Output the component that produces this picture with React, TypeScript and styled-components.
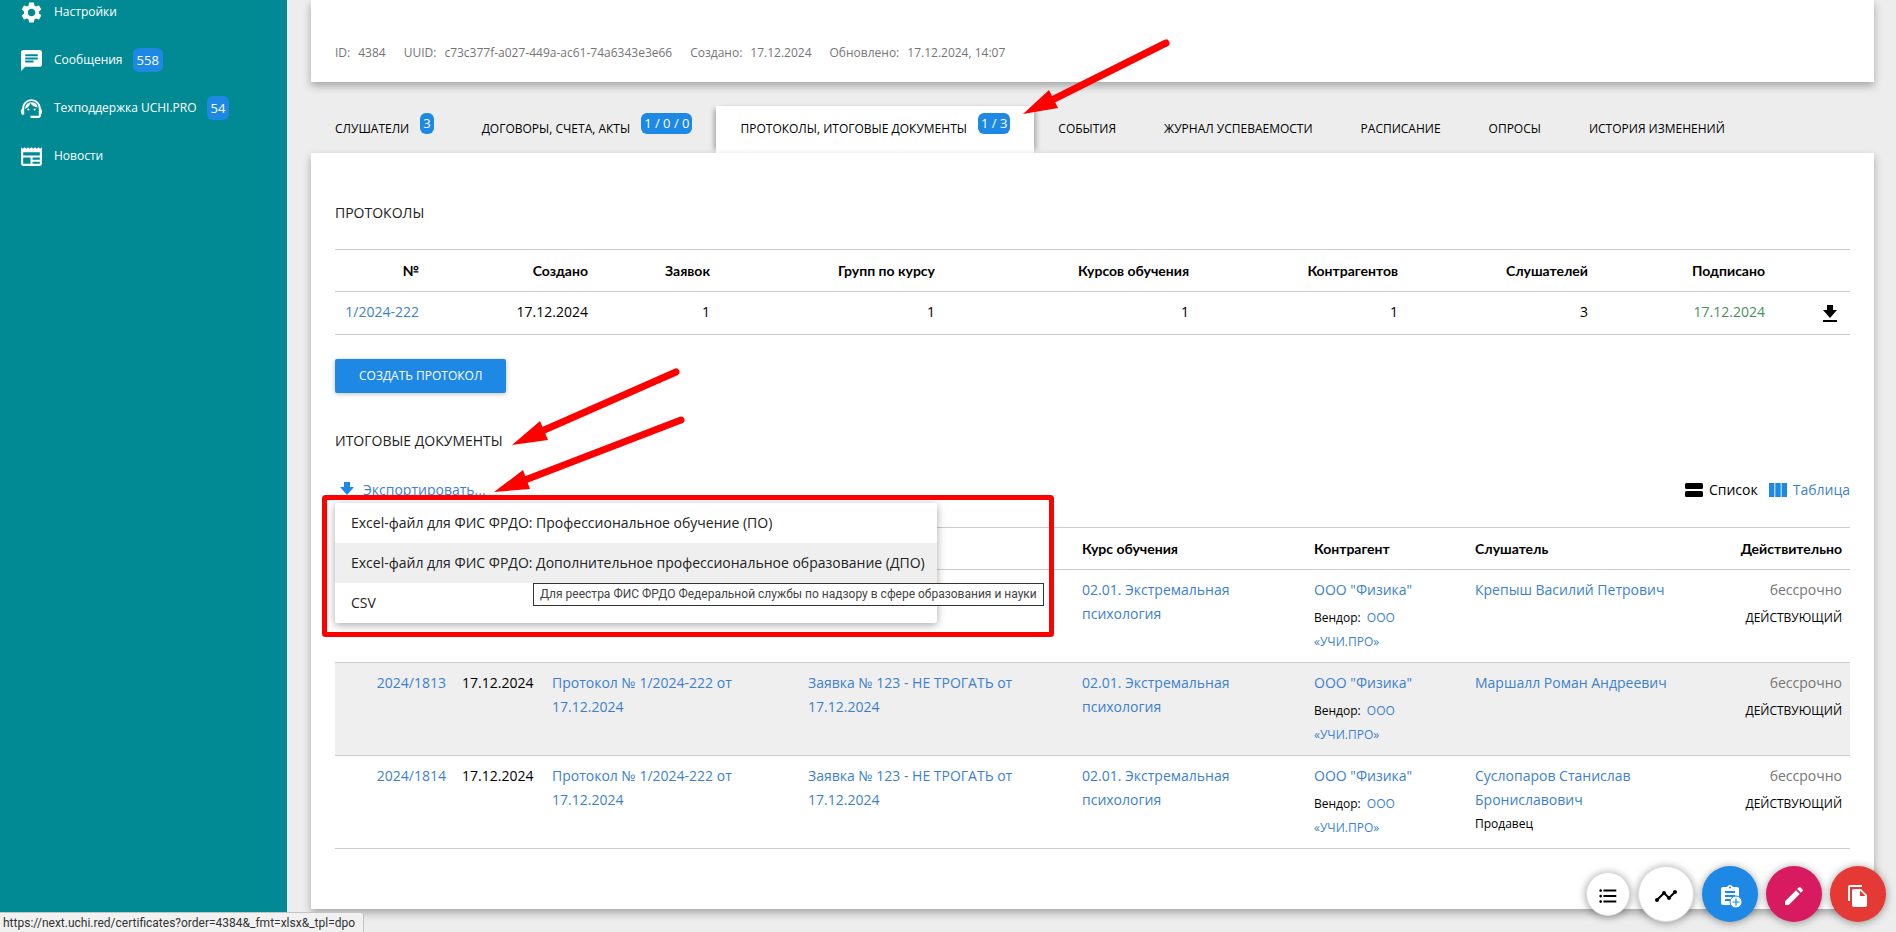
import React from "react";
import styled, { createGlobalStyle, css } from "styled-components";
import {
  MdSettings,
  MdChat,
  MdSupportAgent,
  MdNewspaper,
  MdFormatListBulleted,
  MdTimeline,
  MdEdit,
  MdFileCopy,
} from "react-icons/md";

const color = {
  teal: "#018a94",
  blue: "#1e88e5",
  link: "#3d7fcc",
  page: "#ededed",
  stripe: "#efefef",
  line: "#cdcdcd",
  muted: "#757575",
  green: "#4a9159",
  red: "#ff0000",
};

const GlobalStyle = createGlobalStyle`
  *, *::before, *::after { box-sizing: border-box; }
  body {
    margin: 0;
    background: ${color.page};
    color: #000;
    font: 14px/24px "Open Sans", "Noto Sans", sans-serif;
    overflow: hidden;
  }
  a { color: ${color.link}; text-decoration: none; }
`;

const Shell = styled.div`
  position: relative;
  display: grid;
  grid-template-columns: 287px minmax(0, 1fr);
  min-height: 100vh;
`;

const Sidebar = styled.nav`
  background: ${color.teal};
`;

const NavList = styled.ul`
  list-style: none;
  margin: -12px 0 0;
  padding: 0;
`;

const NavLink = styled.a`
  display: flex;
  align-items: center;
  height: 48px;
  padding: 0 19px;
  gap: 10px;
  color: #fff;
  font-size: 12px;
  svg { width: 25px; height: 25px; flex: none; }
`;

const Badge = styled.span<{ $large?: boolean }>`
  flex: none;
  padding: 0 ${(p) => (p.$large ? 4 : 3)}px;
  border-radius: 6px;
  background: ${color.blue};
  color: #fff;
  font-size: 13px;
  line-height: ${(p) => (p.$large ? 24 : 21)}px;
`;

const Main = styled.main`
  padding: 0 22px 20px 24px;
`;

const Card = styled.section`
  background: #fff;
  padding: 0 24px;
  box-shadow: 0 4px 8px rgba(0, 0, 0, 0.3);
`;

const SummaryCard = styled(Card)`
  padding-top: 41px;
  padding-bottom: 17px;
  margin-bottom: 24px;
`;

const MetaList = styled.dl`
  display: flex;
  gap: 18px;
  margin: 0;
  font-size: 12px;
  color: ${color.muted};
`;

const MetaItem = styled.div`
  display: flex;
  gap: 8px;
  dd { margin: 0; }
`;

const Tabs = styled.div`
  display: flex;
`;

const Tab = styled.button<{ $active?: boolean }>`
  display: flex;
  align-items: flex-start;
  gap: 11px;
  height: 47px;
  padding: 7px 24px;
  border: 0;
  background: none;
  color: #000;
  font: inherit;
  font-size: 12px;
  white-space: nowrap;
  ${(p) =>
    p.$active &&
    css`
      background: #fff;
      box-shadow: -5px 0 5px -3px rgba(0, 0, 0, 0.3), 5px 0 5px -3px rgba(0, 0, 0, 0.3);
    `}
`;

const TabLabel = styled.span`
  padding-top: 4px;
`;

const Panel = styled(Card)`
  position: relative;
  padding-top: 48px;
  padding-bottom: 60px;
`;

const Heading = styled.h2`
  margin: 0 0 24px;
  font-size: 14px;
  font-weight: 400;
  color: #222;
`;

const Table = styled.table`
  width: 100%;
  table-layout: fixed;
  border-collapse: collapse;
`;

const Col = styled.col<{ $w: number }>`
  width: ${(p) => p.$w}px;
`;

const Row = styled.tr<{ $striped?: boolean }>`
  border-top: 1px solid ${color.line};
  border-bottom: 1px solid ${color.line};
  background: ${(p) => (p.$striped ? color.stripe : "transparent")};
`;

const Th = styled.th<{ $right?: boolean }>`
  padding: 9px 8px 8px;
  text-align: ${(p) => (p.$right ? "right" : "left")};
  font-family: Lato, "Open Sans", sans-serif;
  font-weight: 700;
`;

const Td = styled.td<{ $right?: boolean }>`
  padding: 8px;
  vertical-align: top;
  text-align: ${(p) => (p.$right ? "right" : "left")};
`;

const Muted = styled.span`
  color: ${color.muted};
`;

const Signed = styled.span`
  color: ${color.green};
`;

const Note = styled.div<{ $spaced?: boolean }>`
  margin-top: ${(p) => (p.$spaced ? 4 : 0)}px;
  font-size: 12px;
`;

const VendorLink = styled.a`
  margin-left: 3px;
`;

const IconLink = styled.a`
  display: flex;
  justify-content: flex-end;
  align-items: center;
  height: 26px;
  padding-right: 5px;
  color: #000;
`;

const PrimaryButton = styled.button`
  display: block;
  height: 34px;
  margin: 24px 0 36px;
  padding: 0 24px;
  border: 0;
  border-radius: 2px;
  background: ${color.blue};
  color: #fff;
  font: inherit;
  font-size: 12px;
  box-shadow: 0 1px 5px rgba(0, 0, 0, 0.25);
`;

const Toolbar = styled.div`
  display: flex;
  justify-content: space-between;
  height: 26px;
  margin-bottom: 24px;
`;

const ExportBox = styled.div`
  position: relative;
`;

const ExportButton = styled.button`
  display: flex;
  align-items: center;
  gap: 9px;
  height: 26px;
  padding: 0 5px;
  border: 0;
  background: none;
  color: ${color.link};
  font: inherit;
  svg { color: ${color.blue}; }
`;

const Menu = styled.ul`
  position: absolute;
  z-index: 2;
  top: 26px;
  left: 0;
  margin: 0;
  padding: 0;
  list-style: none;
  width: 602px;
  border-radius: 2px;
  background: #fff;
  box-shadow: 0 2px 8px rgba(0, 0, 0, 0.35);
`;

const MenuLink = styled.a<{ $hovered?: boolean }>`
  display: block;
  padding: 0 16px;
  line-height: 40px;
  color: #222;
  white-space: nowrap;
  background: ${(p) => (p.$hovered ? color.stripe : "transparent")};
`;

const Tooltip = styled.div`
  position: absolute;
  z-index: 3;
  top: 80px;
  left: 198px;
  padding: 0 6px;
  border: 1px solid #333;
  background: #fff;
  color: #444;
  font: 12px/21px Roboto, sans-serif;
  white-space: nowrap;
`;

const ViewSwitch = styled.div`
  display: flex;
  gap: 11px;
`;

const ViewButton = styled.button<{ $active?: boolean }>`
  display: flex;
  align-items: center;
  gap: 6px;
  padding: 0;
  border: 0;
  background: none;
  color: ${(p) => (p.$active ? color.link : "#000")};
  font: inherit;
  svg { color: ${(p) => (p.$active ? color.blue : "#000")}; }
`;

const FabBar = styled.div`
  position: fixed;
  z-index: 4;
  right: 10px;
  bottom: 10px;
  display: flex;
  align-items: center;
  gap: 8px;
`;

const Fab = styled.button<{ $bg?: string; $small?: boolean }>`
  display: flex;
  align-items: center;
  justify-content: center;
  width: ${(p) => (p.$small ? 44 : 56)}px;
  height: ${(p) => (p.$small ? 44 : 56)}px;
  padding: 4px 0 0;
  border: ${(p) => (p.$bg ? "0" : "1px solid #dcdcdc")};
  border-radius: 50%;
  background: ${(p) => p.$bg ?? "#fff"};
  color: ${(p) => (p.$bg ? "#fff" : "#000")};
  box-shadow: 0 1px 8px rgba(0, 0, 0, 0.4);
  svg { flex: none; }
`;

const StatusBar = styled.div`
  position: fixed;
  z-index: 5;
  left: 0;
  bottom: 0;
  width: 364px;
  height: 20px;
  padding-left: 3px;
  border-top: 1px solid #c4c4c4;
  border-right: 1px solid #c4c4c4;
  border-top-right-radius: 3px;
  background: #f1f1f1;
  color: #333;
  font: 12px/20px Roboto, sans-serif;
`;

const Annotations = styled.svg`
  position: absolute;
  z-index: 3;
  top: 0;
  left: 0;
  overflow: visible;
  pointer-events: none;
`;

const DownloadIcon = () => (
  <svg width="14" height="17" viewBox="0 0 14 17" fill="currentColor" aria-hidden="true">
    <path d="M4 0h6v5h4L7 13 0 5h4zM0 15h14v2H0z" />
  </svg>
);

const ListIcon = () => (
  <svg width="18" height="14" viewBox="0 0 18 14" fill="currentColor" aria-hidden="true">
    <rect width="18" height="6" rx="1.5" />
    <rect y="8" width="18" height="6" rx="1.5" />
  </svg>
);

const ColumnsIcon = () => (
  <svg width="18" height="14" viewBox="0 0 18 14" fill="currentColor" aria-hidden="true">
    <path d="M0 0h5.4v14H0zM6.3 0h5.4v14H6.3zM12.6 0H18v14h-5.4z" />
  </svg>
);

const ClipboardAddIcon = () => (
  <svg width="24" height="24" viewBox="0 0 24 24" aria-hidden="true">
    <path
      fill="#fff"
      d="M19 3h-4.2C14.4 1.8 13.3 1 12 1s-2.4.8-2.8 2H5a2 2 0 0 0-2 2v14a2 2 0 0 0 2 2h14a2 2 0 0 0 2-2V5a2 2 0 0 0-2-2z"
    />
    <circle cx="12" cy="3.6" r="1" fill={color.blue} />
    <path fill={color.blue} d="M7 7h10v2H7zM7 11h10v2H7zM7 15h7v2H7z" />
    <circle cx="18" cy="18" r="6" fill="#fff" stroke={color.blue} />
    <path fill={color.blue} d="M17.4 14.5h1.2v2.9h2.9v1.2h-2.9v2.9h-1.2v-2.9h-2.9v-1.2h2.9z" />
  </svg>
);

const navItems = [
  { label: "Настройки", icon: <MdSettings /> },
  { label: "Сообщения", icon: <MdChat />, count: 558 },
  { label: "Техподдержка UCHI.PRO", icon: <MdSupportAgent />, count: 54 },
  { label: "Новости", icon: <MdNewspaper /> },
];

const meta = [
  ["ID:", "4384"],
  ["UUID:", "c73c377f-a027-449a-ac61-74a6343e3e66"],
  ["Создано:", "17.12.2024"],
  ["Обновлено:", "17.12.2024, 14:07"],
];

const tabs = [
  { label: "СЛУШАТЕЛИ", badge: "3" },
  { label: "ДОГОВОРЫ, СЧЕТА, АКТЫ", badge: "1 / 0 / 0" },
  { label: "ПРОТОКОЛЫ, ИТОГОВЫЕ ДОКУМЕНТЫ", badge: "1 / 3", active: true },
  { label: "СОБЫТИЯ" },
  { label: "ЖУРНАЛ УСПЕВАЕМОСТИ" },
  { label: "РАСПИСАНИЕ" },
  { label: "ОПРОСЫ" },
  { label: "ИСТОРИЯ ИЗМЕНЕНИЙ" },
];

const protocolCols = [92, 169, 122, 225, 254, 209, 190, 177, 77];
const protocolHeads = [
  "№",
  "Создано",
  "Заявок",
  "Групп по курсу",
  "Курсов обучения",
  "Контрагентов",
  "Слушателей",
  "Подписано",
];

const documentCols = [119, 90, 256, 274, 232, 161, 243, 140];

interface Doc {
  id: number;
  person: string;
  number?: string;
  date?: string;
  protocol?: string;
  order?: string;
  role?: string;
  striped?: boolean;
}

const documents: Doc[] = [
  { id: 1, person: "Крепыш Василий Петрович" },
  {
    id: 2,
    number: "2024/1813",
    date: "17.12.2024",
    protocol: "Протокол № 1/2024-222 от",
    order: "Заявка № 123 - НЕ ТРОГАТЬ от",
    person: "Маршалл Роман Андреевич",
    striped: true,
  },
  {
    id: 3,
    number: "2024/1814",
    date: "17.12.2024",
    protocol: "Протокол № 1/2024-222 от",
    order: "Заявка № 123 - НЕ ТРОГАТЬ от",
    person: "Суслопаров Станислав Брониславович",
    role: "Продавец",
  },
];

const DatedLink = ({ title, date }: { title?: string; date?: string }) =>
  title ? (
    <a href="#">
      {title}
      <br />
      {date}
    </a>
  ) : null;

export default function App() {
  return (
    <>
      <GlobalStyle />
      <Shell>
        <Sidebar>
          <NavList>
            {navItems.map((item) => (
              <li key={item.label}>
                <NavLink href="#">
                  {item.icon}
                  <span>{item.label}</span>
                  {item.count && <Badge $large>{item.count}</Badge>}
                </NavLink>
              </li>
            ))}
          </NavList>
        </Sidebar>

        <Main>
          <SummaryCard>
            <MetaList>
              {meta.map(([name, value]) => (
                <MetaItem key={name}>
                  <dt>{name}</dt>
                  <dd>{value}</dd>
                </MetaItem>
              ))}
            </MetaList>
          </SummaryCard>

          <Tabs role="tablist">
            {tabs.map((tab) => (
              <Tab key={tab.label} role="tab" aria-selected={!!tab.active} $active={tab.active}>
                <TabLabel>{tab.label}</TabLabel>
                {tab.badge && <Badge>{tab.badge}</Badge>}
              </Tab>
            ))}
          </Tabs>

          <Panel>
            <Heading>ПРОТОКОЛЫ</Heading>
            <Table>
              <colgroup>
                {protocolCols.map((w, i) => (
                  <Col key={i} $w={w} />
                ))}
              </colgroup>
              <thead>
                <Row>
                  {protocolHeads.map((head) => (
                    <Th key={head} $right>
                      {head}
                    </Th>
                  ))}
                  <Th />
                </Row>
              </thead>
              <tbody>
                <Row>
                  <Td $right>
                    <a href="#">1/2024-222</a>
                  </Td>
                  <Td $right>17.12.2024</Td>
                  <Td $right>1</Td>
                  <Td $right>1</Td>
                  <Td $right>1</Td>
                  <Td $right>1</Td>
                  <Td $right>3</Td>
                  <Td $right>
                    <Signed>17.12.2024</Signed>
                  </Td>
                  <Td>
                    <IconLink href="#" aria-label="Скачать">
                      <DownloadIcon />
                    </IconLink>
                  </Td>
                </Row>
              </tbody>
            </Table>
            <PrimaryButton>СОЗДАТЬ ПРОТОКОЛ</PrimaryButton>

            <Heading>ИТОГОВЫЕ ДОКУМЕНТЫ</Heading>
            <Toolbar>
              <ExportBox>
                <ExportButton aria-haspopup="menu" aria-expanded="true">
                  <DownloadIcon />
                  Экспортировать...
                </ExportButton>
                <Menu>
                  <li>
                    <MenuLink href="#">Excel-файл для ФИС ФРДО: Профессиональное обучение (ПО)</MenuLink>
                  </li>
                  <li>
                    <MenuLink href="#" $hovered>
                      Excel-файл для ФИС ФРДО: Дополнительное профессиональное образование (ДПО)
                    </MenuLink>
                    <Tooltip role="tooltip">
                      Для реестра ФИС ФРДО Федеральной службы по надзору в сфере образования и науки
                    </Tooltip>
                  </li>
                  <li>
                    <MenuLink href="#">CSV</MenuLink>
                  </li>
                </Menu>
              </ExportBox>
              <ViewSwitch>
                <ViewButton>
                  <ListIcon />
                  Список
                </ViewButton>
                <ViewButton $active>
                  <ColumnsIcon />
                  Таблица
                </ViewButton>
              </ViewSwitch>
            </Toolbar>

            <Table>
              <colgroup>
                {documentCols.map((w, i) => (
                  <Col key={i} $w={w} />
                ))}
              </colgroup>
              <thead>
                <Row>
                  <Th colSpan={4} />
                  <Th>Курс обучения</Th>
                  <Th>Контрагент</Th>
                  <Th>Слушатель</Th>
                  <Th $right>Действительно</Th>
                </Row>
              </thead>
              <tbody>
                {documents.map((doc) => (
                  <Row key={doc.id} $striped={doc.striped}>
                    <Td $right>{doc.number && <a href="#">{doc.number}</a>}</Td>
                    <Td>{doc.date}</Td>
                    <Td>
                      <DatedLink title={doc.protocol} date={doc.date} />
                    </Td>
                    <Td>
                      <DatedLink title={doc.order} date={doc.date} />
                    </Td>
                    <Td>
                      <a href="#">
                        02.01. Экстремальная
                        <br />
                        психология
                      </a>
                    </Td>
                    <Td>
                      <a href="#">ООО "Физика"</a>
                      <Note $spaced>
                        Вендор:{" "}
                        <VendorLink href="#">
                          ООО
                          <br />
                          «УЧИ.ПРО»
                        </VendorLink>
                      </Note>
                    </Td>
                    <Td>
                      <a href="#">{doc.person}</a>
                      {doc.role && <Note>{doc.role}</Note>}
                    </Td>
                    <Td $right>
                      <Muted>бессрочно</Muted>
                      <Note $spaced>ДЕЙСТВУЮЩИЙ</Note>
                    </Td>
                  </Row>
                ))}
              </tbody>
            </Table>
          </Panel>
        </Main>

        <Annotations width="1" height="1" aria-hidden="true">
          <g fill={color.red} stroke={color.red} strokeLinecap="round">
            <path d="M1166 43L1052 100" strokeWidth="7" />
            <path d="M1023 114l26-24 9 18z" strokeWidth="0" />
            <path d="M676 372L542 431" strokeWidth="7" />
            <path d="M512 445l28-24 8 19z" strokeWidth="0" />
            <path d="M681 420L525 480" strokeWidth="7" />
            <path d="M494 492l29-22 7 19z" strokeWidth="0" />
            <rect x="324.5" y="497.5" width="727" height="137" rx="1" fill="none" strokeWidth="5" />
          </g>
        </Annotations>
      </Shell>

      <FabBar>
        <Fab $small aria-label="Список">
          <MdFormatListBulleted size={22} />
        </Fab>
        <Fab aria-label="График">
          <MdTimeline size={24} />
        </Fab>
        <Fab $bg={color.blue} aria-label="Добавить задание">
          <ClipboardAddIcon />
        </Fab>
        <Fab $bg="#d81b60" aria-label="Редактировать">
          <MdEdit size={24} />
        </Fab>
        <Fab $bg="#e53935" aria-label="Копировать">
          <MdFileCopy size={24} />
        </Fab>
      </FabBar>
      <StatusBar>https://next.uchi.red/certificates?order=4384&amp;_fmt=xlsx&amp;_tpl=dpo</StatusBar>
    </>
  );
}
